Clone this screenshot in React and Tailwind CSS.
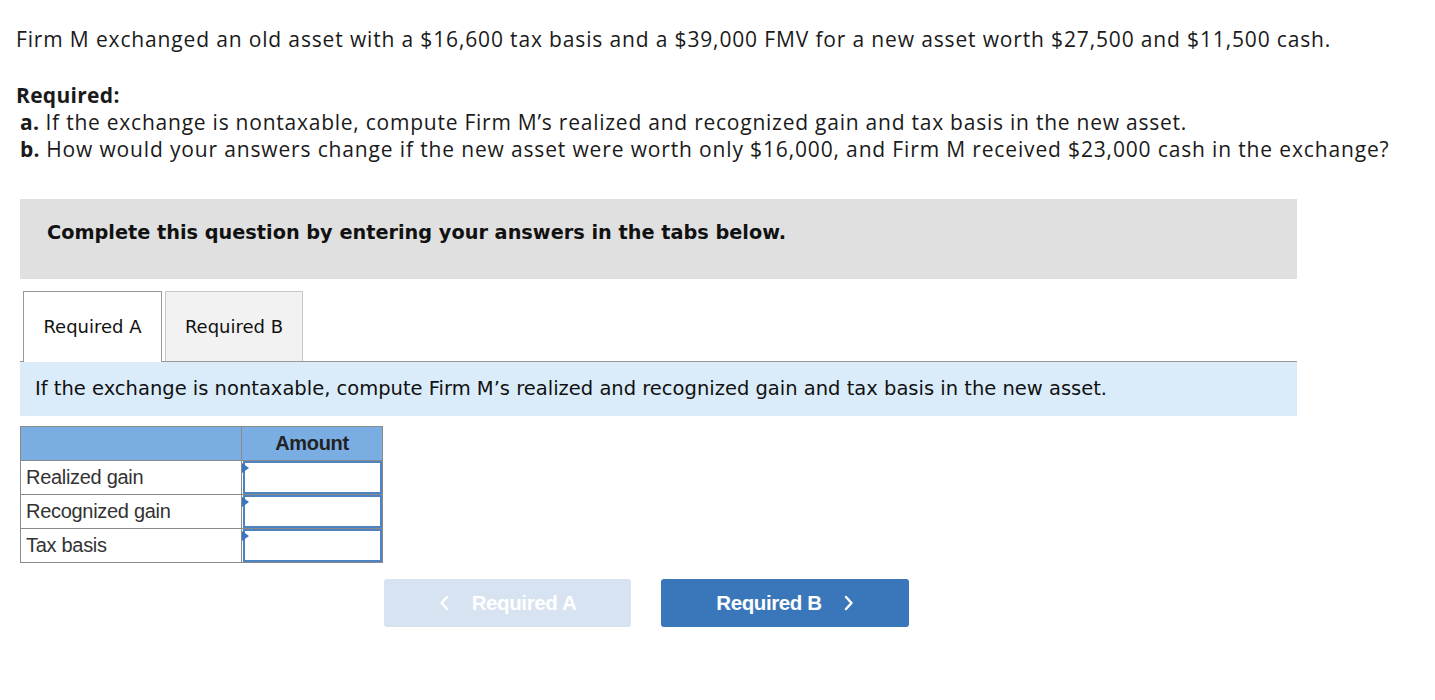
import React from "react";

function InputCell() {
  return (
    <td className="relative border border-[#8a8a8a] p-0 h-[34px]">
      <div className="h-[33px] border-2 border-[#4d82c3] bg-white ml-px"></div>
      <div className="absolute left-0 top-[2px] w-0 h-0 border-t-[5px] border-b-[5px] border-l-[7px] border-t-transparent border-b-transparent border-l-[#3a75c0]"></div>
    </td>
  );
}

export default function App() {
  const rows = ["Realized gain", "Recognized gain", "Tax basis"];
  return (
    <div className="bg-white min-h-[700px] pt-[26px] pl-[16px] text-[#1a1a1a]">
      <div className="font-['Open_Sans','Liberation_Sans',sans-serif] text-[21px] leading-[26px] tracking-[0.85px]">
        <p>
          Firm M exchanged an old asset with a $16,600 tax basis and a $39,000 FMV for a new asset worth $27,500 and $11,500 cash.
        </p>
        <p className="mt-[30px] font-bold leading-[27px] tracking-[0.3px]">Required:</p>
        <p className="pl-[4px] leading-[27px] tracking-[0.76px]">
          <span className="font-bold tracking-[0.3px]">a.</span> If the exchange is nontaxable, compute Firm M’s realized and recognized gain and tax basis in the new asset.
        </p>
        <p className="pl-[4px] leading-[27px]">
          <span className="font-bold tracking-[0.3px]">b.</span> How would your answers change if the new asset were worth only $16,000, and Firm M received $23,000 cash in the exchange?
        </p>
      </div>

      <div className="ml-[4px] w-[1277px] mt-[36px]">
        <div className="h-[80px] bg-[#e0e0e0] pl-[27px] pt-[21px] font-['DejaVu_Sans',Verdana,sans-serif] font-bold text-[19.3px] leading-[26px] text-[#111]">
          Complete this question by entering your answers in the tabs below.
        </div>

        <div className="mt-[12px] flex items-end border-b border-[#999] pl-[3px] font-['DejaVu_Sans',Verdana,sans-serif] text-[18px] text-[#111]">
          <div className="relative -mb-px h-[71px] w-[139px] border border-b-0 border-[#999] bg-white flex items-center justify-center pb-[2px]">
            Required A
          </div>
          <div className="ml-[3px] h-[70px] w-[138px] border border-b-0 border-[#c8c8c8] bg-[#f2f2f2] flex items-center justify-center">
            Required B
          </div>
        </div>

        <div className="h-[54px] bg-[#daecf9] pl-[15px] flex items-center font-['DejaVu_Sans',Verdana,sans-serif] text-[19.5px] text-[#111]">
          If the exchange is nontaxable, compute Firm M’s realized and recognized gain and tax basis in the new asset.
        </div>

        <table className="mt-[10px] border-collapse font-['Liberation_Sans',Arial,sans-serif] text-[20px]">
          <thead>
            <tr className="bg-[#7aaee3] h-[34px]">
              <th className="w-[221px] border border-[#8a8a8a]"></th>
              <th className="w-[141px] border border-[#8a8a8a] font-bold text-[#222] tracking-[-0.3px] pb-[2px]">Amount</th>
            </tr>
          </thead>
          <tbody>
            {rows.map((r) => (
              <tr key={r}>
                <td className="border border-[#8a8a8a] pl-[5px] pb-[2px] h-[34px] text-[#333] tracking-[-0.3px]">{r}</td>
                <InputCell />
              </tr>
            ))}
          </tbody>
        </table>

        <div className="mt-[16px] ml-[364px] flex gap-[30px] font-['Liberation_Sans',Arial,sans-serif] font-bold text-[20.5px] text-white tracking-[-0.4px]">
          <div className="w-[247px] h-[48px] rounded-[3px] bg-[#d7e3f1] flex items-center justify-center gap-[23px]">
            <svg width="10" height="16" viewBox="0 0 10 16" fill="none"><path d="M8 2 L2.5 8 L8 14" stroke="white" strokeWidth="2.5" strokeLinecap="round" strokeLinejoin="round" /></svg>
            <span>Required A</span>
          </div>
          <div className="w-[248px] h-[48px] rounded-[3px] bg-[#3a76ba] flex items-center justify-center gap-[22px]">
            <span>Required B</span>
            <svg width="10" height="16" viewBox="0 0 10 16" fill="none"><path d="M2 2 L7.5 8 L2 14" stroke="white" strokeWidth="2.5" strokeLinecap="round" strokeLinejoin="round" /></svg>
          </div>
        </div>
      </div>
    </div>
  );
}
